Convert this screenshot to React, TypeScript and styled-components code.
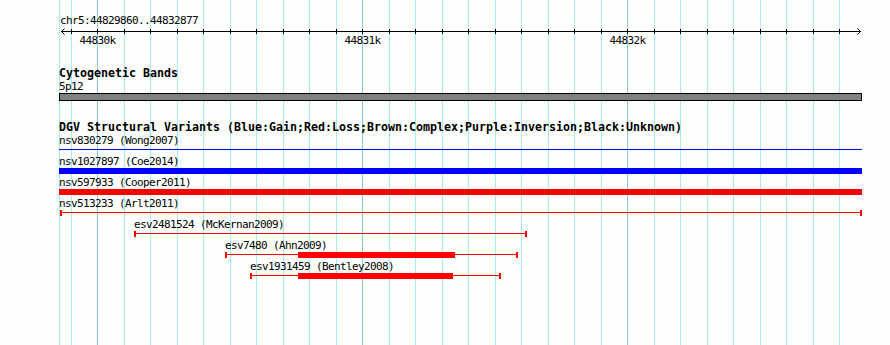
import React from 'react';
import styled, { createGlobalStyle, css } from 'styled-components';

const PANEL_LEFT = 59;
const PANEL_RIGHT = 862;
const PANEL_WIDTH = PANEL_RIGHT - PANEL_LEFT;

const GlobalStyle = createGlobalStyle`
  html, body {
    margin: 0;
    padding: 0;
    background: #fcfefc;
  }
  body {
    width: 890px;
    height: 345px;
    overflow: hidden;
  }
`;

const Canvas = styled.div`
  position: relative;
  width: 890px;
  height: 345px;
  overflow: hidden;
  background: #fcfefc;
  color: #000;
  font-family: "DejaVu Sans Mono", "Liberation Mono", monospace;
`;

const GridLayer = styled.div`
  position: absolute;
  inset: 0;
  pointer-events: none;
`;

const GridLine = styled.div<{ $major?: boolean }>`
  position: absolute;
  top: 0;
  bottom: 0;
  width: 1px;
  background: ${(p) => (p.$major ? '#8cc6dc' : '#aaeaea')};
`;

const Tracks = styled.div`
  position: relative;
  display: flex;
  flex-direction: column;
  margin-left: ${PANEL_LEFT}px;
  width: ${PANEL_WIDTH}px;
`;

const RulerTrack = styled.section`
  display: flex;
  flex-direction: column;
  padding-top: 15px;
`;

const smallFont = css`
  font-size: 11px;
  letter-spacing: -0.62px;
  line-height: 12px;
  white-space: pre;
`;

const SmallText = styled.div<{ $indent?: number; $gap?: number }>`
  ${smallFont};
  height: 12px;
  padding-left: ${(p) => p.$indent ?? 0}px;
  margin-top: ${(p) => p.$gap ?? 0}px;
`;

const RulerSvg = styled.svg`
  display: block;
  width: ${PANEL_WIDTH}px;
  height: 8px;
`;

const TickLabelRow = styled.div`
  position: relative;
  height: 12px;
`;

const TickLabel = styled.span`
  ${smallFont};
  position: absolute;
  top: 0;
  transform: translateX(-50%);
`;

const Track = styled.section<{ $gap: number }>`
  display: flex;
  flex-direction: column;
  margin-top: ${(p) => p.$gap}px;
`;

const TrackTitle = styled.div`
  font-size: 11.63px;
  font-weight: bold;
  line-height: 13px;
  height: 13px;
  white-space: pre;
`;

const Band = styled.div`
  height: 8px;
  box-sizing: border-box;
  border: 1px solid #000;
  background: #808080;
`;

const FeatureList = styled.div`
  display: flex;
  flex-direction: column;
  gap: 3px;
  margin-top: 1px;
`;

const FeatureRow = styled.div`
  display: flex;
  flex-direction: column;
  align-items: flex-start;
`;

type Kind = 'line' | 'bar' | 'capped';

const Glyph = styled.div<{ $color: string; $kind: Kind }>`
  position: relative;
  height: 6px;
  box-sizing: border-box;
  ${(p) =>
    p.$kind === 'bar'
      ? css`
          background: ${p.$color};
        `
      : css`
          &::before {
            content: '';
            position: absolute;
            left: 0;
            right: 0;
            top: 2px;
            height: 1px;
            background: ${p.$color};
          }
        `}
  ${(p) =>
    p.$kind === 'capped' &&
    css`
      &::after {
        content: '';
        position: absolute;
        inset: 0;
        border-left: 2px solid ${p.$color};
        border-right: 2px solid ${p.$color};
      }
    `}
`;

const ThickPart = styled.div<{ $color: string }>`
  position: absolute;
  top: 0;
  height: 6px;
  background: ${(p) => p.$color};
`;

const BLUE = '#0000ff';
const RED = '#ff0000';

type Feature = {
  label: string;
  start: number;
  end: number;
  color: string;
  kind: Kind;
  labelX?: number;
  thick?: [number, number];
};

const features: Feature[] = [
  { label: 'nsv830279 (Wong2007)', start: 59, end: 862, color: BLUE, kind: 'line', labelX: 59 },
  { label: 'nsv1027897 (Coe2014)', start: 59, end: 862, color: BLUE, kind: 'bar', labelX: 59 },
  { label: 'nsv597933 (Cooper2011)', start: 59, end: 862, color: RED, kind: 'bar', labelX: 59 },
  { label: 'nsv513233 (Arlt2011)', start: 60, end: 862, color: RED, kind: 'capped', labelX: 59 },
  { label: 'esv2481524 (McKernan2009)', start: 134, end: 527, color: RED, kind: 'capped' },
  { label: 'esv7480 (Ahn2009)', start: 225, end: 518, color: RED, kind: 'capped', thick: [298, 455] },
  { label: 'esv1931459 (Bentley2008)', start: 250, end: 501, color: RED, kind: 'capped', thick: [298, 453] },
];

const gridXs: { x: number; major: boolean }[] = [{ x: 59, major: false }];
for (let j = -1; j < 30; j++) {
  const x = Math.ceil(97 + 26.5 * j);
  if (x >= PANEL_RIGHT) break;
  gridXs.push({ x, major: j % 10 === 0 });
}
const tickXs = gridXs.slice(1).map((g) => g.x);

const tickLabels = [
  { x: 97, text: '44830k' },
  { x: 362, text: '44831k' },
  { x: 627, text: '44832k' },
];

const rel = (x: number) => x - PANEL_LEFT;

function Ruler() {
  const l = rel(61);
  const r = rel(860);
  return (
    <RulerSvg viewBox={`0 0 ${PANEL_WIDTH} 8`}>
      <line x1={l} y1={4.5} x2={r + 1} y2={4.5} stroke="#000" strokeWidth={1} shapeRendering="crispEdges" />
      {tickXs.map((x) => (
        <line
          key={x}
          x1={rel(x) + 0.5}
          x2={rel(x) + 0.5}
          y1={2}
          y2={7}
          stroke="#000"
          strokeWidth={1}
          shapeRendering="crispEdges"
        />
      ))}
      <polyline points={`${l + 3.5},1.5 ${l + 0.5},4.5 ${l + 3.5},7.5`} fill="none" stroke="#000" strokeWidth={1} />
      <polyline points={`${r - 2.5},1.5 ${r + 0.5},4.5 ${r - 2.5},7.5`} fill="none" stroke="#000" strokeWidth={1} />
    </RulerSvg>
  );
}

export default function App() {
  return (
    <>
      <GlobalStyle />
      <Canvas>
        <GridLayer>
          {gridXs.map((g) => (
            <GridLine key={g.x} $major={g.major} style={{ left: g.x }} />
          ))}
        </GridLayer>
        <Tracks>
          <RulerTrack>
            <SmallText $indent={1}>chr5:44829860..44832877</SmallText>
            <Ruler />
            <TickLabelRow>
              {tickLabels.map((t) => (
                <TickLabel key={t.text} style={{ left: rel(t.x) + 0.5 }}>
                  {t.text}
                </TickLabel>
              ))}
            </TickLabelRow>
          </RulerTrack>

          <Track $gap={20}>
            <TrackTitle>Cytogenetic Bands</TrackTitle>
            <SmallText $gap={1}>5p12</SmallText>
            <Band />
          </Track>

          <Track $gap={20}>
            <TrackTitle>DGV Structural Variants (Blue:Gain;Red:Loss;Brown:Complex;Purple:Inversion;Black:Unknown)</TrackTitle>
            <FeatureList>
              {features.map((f) => (
                <FeatureRow key={f.label}>
                  <SmallText style={{ marginLeft: rel(f.labelX ?? f.start) }}>{f.label}</SmallText>
                  <Glyph
                    $color={f.color}
                    $kind={f.kind}
                    style={{ marginLeft: rel(f.start), width: f.end - f.start }}
                  >
                    {f.thick && (
                      <ThickPart
                        $color={f.color}
                        style={{ left: f.thick[0] - f.start, width: f.thick[1] - f.thick[0] }}
                      />
                    )}
                  </Glyph>
                </FeatureRow>
              ))}
            </FeatureList>
          </Track>
        </Tracks>
      </Canvas>
    </>
  );
}
